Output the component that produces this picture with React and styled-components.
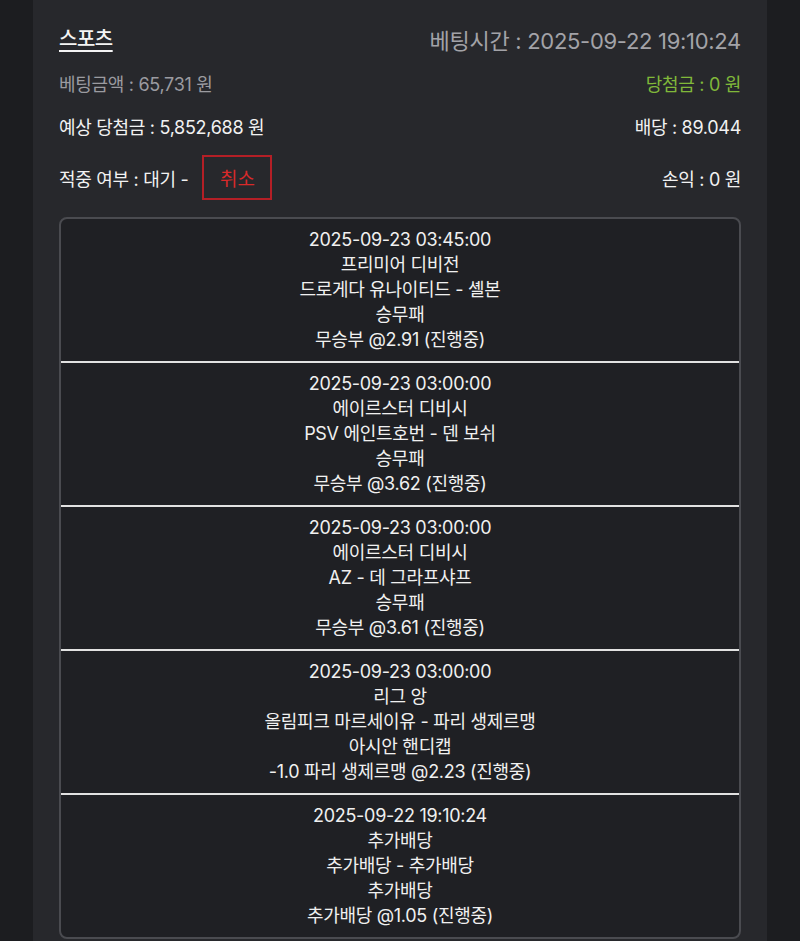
import React from "react";
import styled, { createGlobalStyle } from "styled-components";

const GlobalStyle = createGlobalStyle`
  body {
    margin: 0;
    background: #1c1d20;
    font-family: Inter, "Noto Sans CJK KR", sans-serif;
    color: #f0f0f0;
  }
`;

const Page = styled.div`
  display: flex;
  justify-content: center;
  padding: 0 33px;
  min-height: 100vh;
`;

const Panel = styled.div`
  flex: 1;
  background: #27282c;
  padding: 22px 26px 40px;
`;

const Header = styled.div`
  display: flex;
  justify-content: space-between;
  align-items: center;
  height: 34px;
`;

const Title = styled.a`
  font-size: 20px;
  font-weight: 500;
  color: #f4f4f4;
  text-decoration: underline;
  text-underline-offset: 4px;
  text-decoration-thickness: 1.5px;
  margin-top: -4px;
  letter-spacing: -0.5px;
`;

const BetTime = styled.span`
  font-size: 22px;
  color: #a3a3a8;
  letter-spacing: -0.3px;
`;

const InfoRow = styled.div`
  display: flex;
  justify-content: space-between;
  align-items: center;
  min-height: ${(p) => p.$height || 26}px;
  margin-top: ${(p) => p.$gap || 17}px;
  font-size: 18px;
  letter-spacing: -0.3px;
`;

const Label = styled.span`
  color: ${(p) => p.$color || "#f2f2f2"};
  display: flex;
  align-items: center;
`;

const CancelButton = styled.button`
  box-sizing: border-box;
  width: 70px;
  height: 45px;
  margin-left: 14px;
  background: transparent;
  border: 2px solid #b41f26;
  color: #d82a2a;
  font-family: inherit;
  font-size: 19px;
  padding: 0;
  cursor: pointer;
`;

const BetBox = styled.div`
  margin-top: 17px;
  border: 2px solid #4a4b50;
  border-radius: 8px;
  background: #1f2024;
  overflow: hidden;
`;

const BetItem = styled.div`
  display: flex;
  flex-direction: column;
  align-items: center;
  padding: 8px 0 9px;
  font-size: 18px;
  line-height: 25px;
  letter-spacing: -0.3px;
  color: #f0f0f0;
  & + & {
    border-top: 2px solid #e2e2e2;
  }
`;

const bets = [
  {
    time: "2025-09-23 03:45:00",
    league: "프리미어 디비전",
    match: "드로게다 유나이티드 - 셸본",
    market: "승무패",
    pick: "무승부 @2.91 (진행중)",
  },
  {
    time: "2025-09-23 03:00:00",
    league: "에이르스터 디비시",
    match: "PSV 에인트호번 - 덴 보쉬",
    market: "승무패",
    pick: "무승부 @3.62 (진행중)",
  },
  {
    time: "2025-09-23 03:00:00",
    league: "에이르스터 디비시",
    match: "AZ - 데 그라프샤프",
    market: "승무패",
    pick: "무승부 @3.61 (진행중)",
  },
  {
    time: "2025-09-23 03:00:00",
    league: "리그 앙",
    match: "올림피크 마르세이유 - 파리 생제르맹",
    market: "아시안 핸디캡",
    pick: "-1.0 파리 생제르맹 @2.23 (진행중)",
  },
  {
    time: "2025-09-22 19:10:24",
    league: "추가배당",
    match: "추가배당 - 추가배당",
    market: "추가배당",
    pick: "추가배당 @1.05 (진행중)",
  },
];

export default function App() {
  return (
    <>
      <GlobalStyle />
      <Page>
        <Panel>
          <Header>
            <Title>스포츠</Title>
            <BetTime>베팅시간 : 2025-09-22 19:10:24</BetTime>
          </Header>
          <InfoRow $gap={14}>
            <Label $color="#9b9ba0">베팅금액 : 65,731 원</Label>
            <Label $color="#80b83a">당첨금 : 0 원</Label>
          </InfoRow>
          <InfoRow>
            <Label>예상 당첨금 : 5,852,688 원</Label>
            <Label>배당 : 89.044</Label>
          </InfoRow>
          <InfoRow $gap={16} $height={45}>
            <Label>
              적중 여부 : 대기 -<CancelButton>취소</CancelButton>
            </Label>
            <Label>손익 : 0 원</Label>
          </InfoRow>
          <BetBox>
            {bets.map((b, i) => (
              <BetItem key={i}>
                <span>{b.time}</span>
                <span>{b.league}</span>
                <span>{b.match}</span>
                <span>{b.market}</span>
                <span>{b.pick}</span>
              </BetItem>
            ))}
          </BetBox>
        </Panel>
      </Page>
    </>
  );
}
